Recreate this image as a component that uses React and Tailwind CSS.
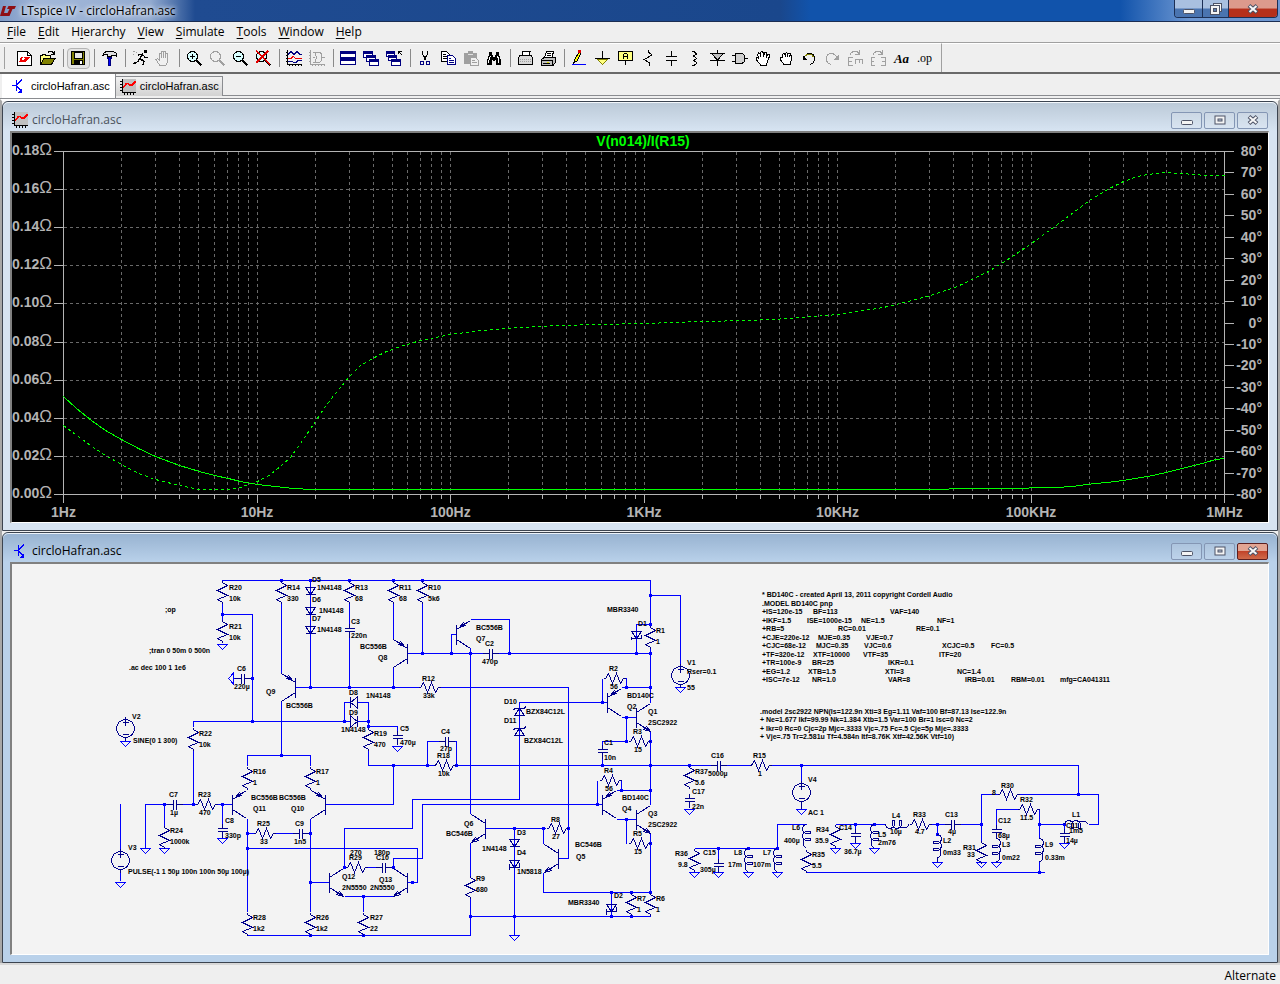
import React from 'react';
import clsx from 'clsx';

const menus = ['File', 'Edit', 'Hierarchy', 'View', 'Simulate', 'Tools', 'Window', 'Help'];
// index of the underlined accelerator letter
const accelerators = { Hierarchy: 1 };

/* ---------- toolbar icons ---------- */

const K = '#000000';
const G = '#a0a0a0';
const N = '#000080';

const Lens = ({ color = K, fill = '#d8ffff', children }) => (
  <>
    <path d="M10 10L15.500 15.500" stroke={color} strokeWidth="2" />
    <circle cx="6.500" cy="6.500" r="5" fill={fill} stroke={color} />
    {children}
  </>
);

const PlotAxes = ({ color }) => (
  <path d="M1.500 0V14.500H16M0 2.500H1M0 5.500H1M0 8.500H1M0 11.500H1M3.500 14V16M6.500 14V16M9.500 14V16M12.500 14V16M15.500 14V16" stroke={color} fill="none" />
);

const Rect = ({ x, y, w, h }) => (
  <>
    <rect x={x + 0.5} y={y + 0.5} width={w - 1} height={h - 1} fill="#fff" stroke={N} />
    <rect x={x} y={y} width={w} height="3" fill={N} />
  </>
);

const icons = {
  New: (
    <>
      <path d="M1.500 1.500H11.500L15.500 5.500V15.500H1.500Z" fill="#fff" stroke={K} />
      <path d="M11.500 1.500V5.500H15.500" fill="none" stroke={K} />
      <path d="M5 7H7L6 10H8L9 8H8V7H14L13 9H12L10 12H3Z" fill="#f00000" />
    </>
  ),
  Open: (
    <>
      <path d="M1.500 13.500V5.500H3L4 4.500H6L7 5.500H11.500V8.500" fill="#ffff80" stroke={K} />
      <path d="M1.500 14.500L5 8.500H16L12.500 14.500Z" fill="#808000" stroke={K} />
      <path d="M9 2.500C11 .5 13 1 15 3.500M15.500 1V4.500H12" fill="none" stroke={K} />
    </>
  ),
  Save: (
    <>
      <rect x="1.500" y="1.500" width="13" height="13" fill="#808000" stroke={K} />
      <rect x="4" y="2" width="8" height="6" fill="#e8e8e8" stroke={K} />
      <rect x="4" y="10" width="9" height="5" fill={K} />
      <rect x="10" y="11" width="2" height="3" fill="#fff" />
    </>
  ),
  'Control Panel': (
    <>
      <path d="M1.500 5.500L3.500 2.500L5.500 1.500H12.500L15.500 3.500V6.500L14 5.500H11L10.500 6.500H6.500L6 4.500H4Z" fill="#e0e0e0" stroke={K} />
      <path d="M6.500 7.500H10.500L9.500 9.500V15.500H7.500V9.500Z" fill="#0000ff" stroke={N} />
    </>
  ),
  Run: (
    <>
      <rect x="12" y="0" width="3" height="3" fill={K} />
      <path d="M11 3.500L8 8.500L12 11.500L11 15M7.500 9L5.500 12.500L1 13.500" fill="none" stroke={K} strokeWidth="1.500" />
      <path d="M10 4.500L7 4.500L5.500 6.500M11.500 5.500L13 7.500H15.500" fill="none" stroke={K} />
      <path d="M1 1.500H3M4 2.500H5M1 4.500H2" stroke={G} />
    </>
  ),
  Halt: <path d="M4.500 15L1 9.500L2.500 8.500L4.500 10.500V3.500H6.500V8V1.500H8.500V8V1.500H10.500V8V3.500H12.500V12L11 15ZM6.500 15.500H11" fill="#f0f0f0" stroke={G} />,
  'Zoom Area': <Lens><path d="M4 6.500H9M6.500 4V9" stroke={K} /></Lens>,
  Pan: <Lens color={G} fill="#f0f0f0" />,
  'Zoom Back': <Lens><path d="M4 6.500H9" stroke={K} /></Lens>,
  'Zoom Full': <Lens><path d="M1 1L15 14M13 1L1 13" stroke="#e00000" strokeWidth="1.500" /></Lens>,
  'Autorange Y': (
    <>
      <PlotAxes color={K} />
      <path d="M2 4.500L5 1.500L8 4.500L11 1.500L14 4.500H16" stroke={N} fill="none" />
      <path d="M2 8.500H5L7 6.500L10 8.500H16" stroke="#f00000" fill="none" />
      <path d="M2 11.500H6L8 12.500H10L12 10.500H16" stroke={N} fill="none" />
    </>
  ),
  'Plot Settings': (
    <>
      <PlotAxes color={G} />
      <path d="M4 7.500H6M6 2.500H10C14 3 14 11 10 12.500H6L7.500 7.500ZM4 2.500H6M4 12.500H6M13 7.500H16" stroke={G} fill="none" />
    </>
  ),
  'Tile Windows': <><Rect x={0} y={1} w={16} h={7} /><Rect x={0} y={8} w={16} h={7} /></>,
  'Cascade Windows': <><Rect x={0} y={1} w={10} h={7} /><Rect x={3} y={5} w={10} h={7} /><Rect x={6} y={9} w={10} h={7} /></>,
  'Close Windows': (
    <>
      <Rect x={0} y={1} w={9} h={6} /><Rect x={2} y={5} w={9} h={6} /><Rect x={5} y={9} w={10} h={7} />
      <path d="M12 1.500H16M12.500 1V4M12 1L16 5" stroke={K} fill="none" />
    </>
  ),
  Cut: (
    <>
      <path d="M5.500 1V4L9.500 10.500M10.500 1V4L6.500 10.500" stroke={K} fill="none" />
      <circle cx="5" cy="13" r="2" fill="none" stroke={N} />
      <circle cx="11" cy="13" r="2" fill="none" stroke={N} />
    </>
  ),
  Copy: (
    <>
      <path d="M1.500 1.500H6.500L9.500 4.500V11.500H1.500Z" fill="#fff" stroke={K} />
      <path d="M3 4.500H6M3 6.500H7M3 8.500H7" stroke={K} />
      <path d="M7.500 5.500H12.500L15.500 8.500V14.500H7.500Z" fill="#fff" stroke={N} />
      <path d="M9 8.500H11M9 10.500H14M9 12.500H14" stroke={N} />
    </>
  ),
  Paste: (
    <>
      <path d="M1 3H5V1H10V3H14V14H1Z" fill={G} />
      <path d="M5 4.500H10" stroke="#e0e0e0" />
      <path d="M7.500 7.500H12.500L15.500 10.500V15.500H7.500Z" fill="#f0f0f0" stroke={G} />
      <path d="M9 10.500H12M9 12.500H14" stroke={G} />
    </>
  ),
  Find: (
    <>
      <path d="M3 2H6V5H7V7H9V5H10V2H13V5L15 10V15H10V10H9V11H7V10H6V15H1V10L3 5Z" fill={K} />
      <path d="M4.500 6L2.500 11V13M11.500 6L12.500 9V13" stroke="#fff" fill="none" />
    </>
  ),
  'Print Setup': (
    <>
      <path d="M4.500 6.500L6 1.500H13L12 6.500" fill="#fff" stroke={K} />
      <path d="M1.500 7.500L3 5.500H14L15.500 7.500V14.500H1.500Z" fill="#d8d8d8" stroke={K} />
      <path d="M3 9.500H14M3 11.500H14" stroke={G} strokeDasharray="1 1" />
    </>
  ),
  Print: (
    <>
      <path d="M4.500 7.500L6.500 1.500H13.500L12 7.500" fill="#fff" stroke={K} />
      <path d="M7 3.500H11M6.500 5.500H11" stroke={K} />
      <path d="M1.500 9.500L4 7.500H15.500V12L13 15.500H1.500Z" fill="#c0c0c0" stroke={K} />
      <path d="M1.500 10.500H12.500V15M3 13.500H10" stroke={K} fill="none" />
      <path d="M7 12.500H9" stroke="#e0e000" />
    </>
  ),
  Wire: (
    <>
      <path d="M2.500 13L4 9L8 2L10 3L6 11Z" fill="#ffff00" stroke={K} />
      <rect x="7" y="0" width="3" height="3" fill="#e00000" />
      <path d="M1 14.500H15" stroke="#0000ff" />
    </>
  ),
  Ground: (
    <>
      <path d="M8.500 1V8.500" stroke={K} />
      <path d="M3 9L8.500 14.500L14 9Z" fill="#ffff80" stroke="#808000" />
      <path d="M1 8.500H16" stroke={K} />
    </>
  ),
  'Label Net': (
    <>
      <rect x="1.500" y="1.500" width="14" height="9" fill="#ffff80" stroke={K} />
      <path d="M6.500 9V4.500L7.500 3.500H9.500L10.500 4.500V9M6.500 6.500H10.500" stroke={K} fill="none" />
      <path d="M8.500 11V15" stroke={K} />
    </>
  ),
  Resistor: <path d="M8.500 0V2L12 5L4 9.500L9 12.500V16" stroke={K} fill="none" />,
  Capacitor: <><path d="M8.500 1V7M8.500 10V16" stroke={K} /><path d="M3 6.500H14M3 10.500H14" stroke={K} /></>,
  Inductor: <path d="M6 1.500H8L10 3.500V4.500L7 6H8L10 8V9L7 10.500H8L10 12V14L8 15.500H6" stroke={K} fill="none" />,
  Diode: <><path d="M8.500 0V16M1 10.500H16M1 3.500H16" stroke={K} /><path d="M2.500 3.500H14.500L8.500 10Z" fill="#c0c0c0" stroke={K} /></>,
  Component: <><path d="M0 5.500H4M0 11.500H4M13 8.500H16" stroke={K} /><path d="M3.500 3.500H9C14 4 14 13 9 13.500H3.500Z" fill="#d0d0d0" stroke={K} /></>,
  Move: <path d="M5.500 14.500L1 9.500V7.500H2.500L4 9L2.500 4.500L3.500 3L5 4L6 7L5.500 2.500L7 1L8.500 3V7L10 2L12 2.500L11 8L13 4.500L15 5L13 10L11 15.500H6Z" fill="#fff" stroke={K} />,
  Drag: (
    <>
      <path d="M6 14.500L2.500 10V8L4.500 7.500V4.500L6 3.500L7 4.500L8.500 2.500L10 4L12 3.500V5L13.500 5.500V9L12 14.500Z" fill="#fff" stroke={K} />
      <path d="M7.500 4V7M9.500 4V7M11.500 5V7" stroke={K} />
    </>
  ),
  Undo: <><path d="M3 8C5 2.500 12 2 13.500 7C14.500 11 12 14 9 14.500" stroke={K} fill="none" /><path d="M4 6C7 3 11 4 12.500 7" stroke="#808000" fill="none" /><path d="M1.500 5V10H6.500Z" fill={K} /></>,
  Redo: <><path d="M13 8C11 2.500 4 2 2.500 7C1.500 11 4 14 7 14.500" stroke={G} fill="none" /><path d="M14.500 5V10H9.500Z" fill={G} /></>,
  Rotate: <path d="M3 4.500C5 .5 10 .5 12 3.500M12.500 0V4.500H8M6 7.500H1.500V15.500H6M1.500 11.500H5M8 10V9.500H16M8.500 9V14M12.500 10V13M15.500 9V14" stroke={G} fill="none" />,
  Mirror: <path d="M3 4.500C5 .5 10 .5 12 3.500M12.500 0V4.500H8M5 7.500H1.500V15.500H5M1.500 11.500H4M11 7.500H15.500V15.500H11M15.500 11.500H12" stroke={G} fill="none" />,
};

const toolGroups = [
  ['New', 'Open'],
  ['Save'],
  ['Control Panel'],
  ['Run', 'Halt'],
  ['Zoom Area', 'Pan', 'Zoom Back', 'Zoom Full'],
  ['Autorange Y', 'Plot Settings'],
  ['Tile Windows', 'Cascade Windows', 'Close Windows'],
  ['Cut', 'Copy', 'Paste', 'Find'],
  ['Print Setup', 'Print'],
  ['Wire', 'Ground', 'Label Net', 'Resistor', 'Capacitor', 'Inductor', 'Diode', 'Component', 'Move', 'Drag', 'Undo', 'Redo', 'Rotate', 'Mirror', 'Text', 'SPICE Directive'],
];

const ToolButton = ({ name }) => (
  <button
    title={name}
    aria-label={name}
    className={clsx(
      'flex h-[21px] w-[23px] items-center justify-center',
      name === 'Save' && 'rounded-sm border border-[#b4b4b4] bg-[#e4e4e4]'
    )}
  >
    {name === 'Text' && <span className="font-['Liberation_Serif',serif] text-[13px] leading-none font-bold italic">Aa</span>}
    {name === 'SPICE Directive' && <span className="font-['Liberation_Serif',serif] text-[12px] leading-none">.op</span>}
    {icons[name] && (
      <svg viewBox="0 0 17 17" className="size-[17px] shrink-0" shapeRendering="crispEdges">{icons[name]}</svg>
    )}
  </button>
);

const PlotIcon = ({ className }) => (
  <svg viewBox="0 0 16 16" className={clsx('size-4 shrink-0', className)} shapeRendering="crispEdges">
    <rect x="2" width="14" height="14" fill="#c0c0c0" />
    <path d="M2.500 0V13.500H16M0 2.500H2M0 5.500H2M0 8.500H2M0 11.500H2M4.500 14V16M7.500 14V16M10.500 14V16M13.500 14V16" stroke="#000" fill="none" />
    <path d="M3 8.500L6 5L8 4.500L10 6L12 6L15.500 2.500" stroke="#f00" strokeWidth="1.500" fill="none" />
  </svg>
);

const SchematicIcon = ({ className }) => (
  <svg viewBox="0 0 16 16" className={clsx('size-4 shrink-0', className)} shapeRendering="crispEdges">
    <path d="M2 7.500H6M6.500 2V13M7 6.500L12 1.500M7 8.500L12 13.500" stroke="#0000ff" fill="none" />
    <path d="M12 14.500V10.500L8 14.500Z" fill="#0000ff" />
  </svg>
);

/* ---------- window chrome ---------- */

const MinGlyph = () => (
  <svg viewBox="0 0 12 12" className="h-3 w-3"><rect x="0.500" y="6.500" width="11" height="4" rx="1" fill="#f4f4f4" stroke="#4d5366" /></svg>
);
const MaxGlyph = () => (
  <svg viewBox="0 0 12 12" className="h-3 w-3">
    <rect x="1" y="2" width="10" height="8" fill="#f4f4f4" stroke="#4d5366" />
    <rect x="4" y="5" width="4" height="2" fill="#b9c6da" stroke="#4d5366" />
  </svg>
);
const RestoreGlyph = () => (
  <svg viewBox="0 0 12 12" className="h-3 w-3">
    <rect x="3.500" y="0.500" width="8" height="8" fill="#f4f4f4" stroke="#4d5366" />
    <rect x="0.500" y="2.500" width="9" height="9" fill="#f4f4f4" stroke="#4d5366" />
    <rect x="3.500" y="5.500" width="3" height="3" fill="#5b7db0" stroke="#4d5366" />
  </svg>
);
const CloseGlyph = () => (
  <svg viewBox="0 0 12 12" className="h-3 w-3">
    <path d="M2 2.500L10 9.500M10 2.500L2 9.500" stroke="#4d5366" strokeWidth="4" />
    <path d="M2.500 3L9.500 9M9.500 3L2.500 9" stroke="#f8f8f8" strokeWidth="2" />
  </svg>
);

const ChildButton = ({ label, danger, children }) => (
  <button
    aria-label={label}
    className={clsx(
      'flex h-[17px] w-[31px] items-center justify-center rounded-xs border',
      danger ? 'border-[#5c1f1f] bg-linear-to-b from-[#e2a593] from-45% via-[#c2442a] via-50% to-[#cf6a4a]' : 'border-[#8496b4] bg-white/10'
    )}
  >
    {children}
  </button>
);

const ChildWindow = ({ active, icon, title, children }) => (
  <section
    className={clsx(
      'rounded-t-md border border-[#3c4450]',
      active ? 'bg-[#b9d1ea]' : 'bg-[#d7e4f2]'
    )}
  >
    <header
      className={clsx(
        'flex h-[29px] items-center rounded-t-md border-t border-white/70 bg-linear-to-b pt-1.5 pr-[9px] pl-2',
        active ? 'from-[#98b3d1] to-[#b9d1ea]' : 'from-[#bccad8] to-[#d7e4f2]'
      )}
    >
      {icon}
      <h2 className={clsx("ml-1 grow font-['Open_Sans',sans-serif] text-[12px] leading-4", active ? 'text-black' : 'text-[#4a525c]')}>{title}</h2>
      <div className="flex gap-0.5">
        <ChildButton label="Minimize"><MinGlyph /></ChildButton>
        <ChildButton label="Maximize"><MaxGlyph /></ChildButton>
        <ChildButton label="Close" danger={active}><CloseGlyph /></ChildButton>
      </div>
    </header>
    <div className="mr-2 mb-[7px] ml-[7px] border-t-2 border-r border-b border-l-2 border-t-[#808080] border-r-white border-b-white border-l-[#808080]">
      {children}
    </div>
  </section>
);

/* ---------- waveform plot ---------- */

const LEFT = 63.5;
const RIGHT = 1224.5;
const TOP = 151.5;
const BOTTOM = 494.5;
const DECADE = (RIGHT - LEFT) / 6;

const freqLabels = ['1Hz', '10Hz', '100Hz', '1KHz', '10KHz', '100KHz', '1MHz'];
const ohmLabels = ['0.18', '0.16', '0.14', '0.12', '0.10', '0.08', '0.06', '0.04', '0.02', '0.00'];
const phaseLabels = Array.from({ length: 17 }, (_, i) => 80 - i * 10);

const gridX = [];
for (let d = 0; d < 6; d++) {
  for (let m = 1; m <= 9; m++) {
    gridX.push({ x: Math.floor(LEFT + DECADE * (d + Math.log10(m))) + 0.5, major: m === 1 });
  }
}
gridX.push({ x: RIGHT, major: true });

const magnitude =
  '63,396 76,408 91,420 105,430 121,439 138,448 155,456 179,465 199,471 214,475 228,478 240,481 257,484 275,486 293,488 312,489 948,489 949,488 1028,488 1029,487 1055,487 1072,486 1086,484 1106,482 1123,480 1147,476 1166,472 1181,468 1194,465 1205,462 1215,459 1224,458';
const phase =
  '63,425 75,434 90,445 105,455 121,464 138,473 155,479 179,485 199,489 213,489 228,489 240,487 248,484 257,481 270,474 281,465 290,457 300,443 315,421 324,407 335,393 349,376 360,365 372,358 386,351 400,346 420,340 450,334 480,330 520,327 560,325 600,324 645,323 700,321 750,320 790,318 838,314 883,307 895,304 908,301 930,295 957,286 988,271 1012,256 1031,243 1053,227 1077,209 1089,200 1107,189 1123,181 1137,176 1147,174 1166,172 1181,173 1194,174 1205,175 1224,175';

const Plot = () => (
  <svg viewBox="12 133 1256 389" className="block w-full bg-black" role="img" aria-label="Output impedance plot">
    <g shapeRendering="crispEdges" fill="none">
      <g stroke="#696969" strokeDasharray="3 3">
        {gridX.slice(1, -1).map(({ x }) => <path key={x} d={`M${x} ${TOP}V${BOTTOM}`} />)}
        {ohmLabels.slice(1, -1).map((label, i) => {
          const y = Math.floor(TOP + (i + 1) * 38.1) + 0.5;
          return <path key={label} d={`M${LEFT} ${y}H${RIGHT}`} />;
        })}
      </g>
      <g stroke="#b4b4b4">
        <path d={`M54 ${TOP}H1234M54 ${BOTTOM}H1234M${LEFT} ${TOP}V503M${RIGHT} ${TOP}V503`} />
        {gridX.map(({ x, major }) => <path key={x} d={`M${x} ${BOTTOM}V${major ? 503 : 499}`} />)}
        {ohmLabels.map((label, i) => {
          const y = Math.floor(TOP + i * 38.1) + 0.5;
          return <path key={label} d={`M54 ${y}H${LEFT}`} />;
        })}
        {phaseLabels.map((deg, i) => {
          const y = Math.floor(TOP + i * 21.44) + 0.5;
          return <path key={deg} d={`M${RIGHT} ${y}H1234`} />;
        })}
      </g>
      <g stroke="#00ff00" transform="translate(0.5 0.5)">
        <polyline points={magnitude} />
        <polyline points={phase} strokeDasharray="3 3" />
      </g>
    </g>
    <g className="font-['Liberation_Sans',sans-serif] text-[14px]" fill="#b4b4b4">
      {ohmLabels.map((label, i) => (
        <text key={label} x="12" y={Math.floor(TOP + i * 38.1) + 4}>
          <tspan className="font-bold">{label}</tspan>
          <tspan className="text-[17px]">Ω</tspan>
        </text>
      ))}
      {phaseLabels.map((deg, i) => (
        <text key={deg} x="1262" y={Math.floor(TOP + i * 21.44) + 5} textAnchor="end" className="font-bold">{deg}°</text>
      ))}
      {freqLabels.map((label, i) => (
        <text key={label} x={LEFT + i * DECADE} y="517" textAnchor="middle" className="font-bold">{label}</text>
      ))}
      <text x="643" y="146" textAnchor="middle" fill="#00ff00" className="font-bold">V(n014)/I(R15)</text>
    </g>
  </svg>
);

/* ---------- schematic ---------- */

const wires = [
  'M222 580.500H650.500V626M650.500 647V703M650.500 732V805M650.500 834V893',
  'M650.500 595.500H680.500V665M222.500 603V620M222.500 614.500H252.500V721.500M193.500 727V721.500H344.500V702.500H350M358 702.500H368.500V727',
  'M344.500 721.500H350M358 721.500H368.500M281.500 603V673M281.500 702V755.500M247.500 766V755.500H310.500V766',
  'M310.500 580V687.500M295.500 687.500H419M440 687.500H568.500V858.500H558.500M349.500 603V627M349.500 632V687.500',
  'M393.500 603V639M393.500 668V687.500M422.500 603V653.500M407.500 653.500H488M493 653.500H650.500',
  'M451.500 653.500V634.500H456M470.500 619.500H509.500V653.500M470.500 648V814M470.500 843V876M470.500 898V935.500H247.500',
  'M470.500 916.500H650.500M514.500 828V935M485.500 828.500H546M543.500 828.500V844M543.500 873V892.500H650.500',
  'M368.500 726.500H397.500V734M368.500 749V765.500H434M454 765.500H716M721 765.500H750M771 765.500H1078.500V794.500',
  'M393.500 765.500V804.500H325.500M427.500 765.500V741.500H444M449 741.500H456.500V765.500',
  'M607.500 702.500H519.500V799.500H412.500V828.500H344.500V867.500M602.500 804.500H422.500V858.500H393.500V867.500',
  'M407.500 882.500H417.500V848.500H247.500M329.500 882.500H310.500M310.500 819V912M247.500 819V912',
  'M247.500 833.500H254M274 833.500H298M303 833.500H310.500M344.500 896.500H393.500M363.500 896.500V912M367 867.500H381M386 867.500H393.500',
  'M145.500 848V804.500H172M177 804.500H196M217 804.500H232.500M164.500 804.500V826M193.500 749V804.500M222.500 804.500V827M120.500 804V850M120.500 869V881',
  'M602.500 702.500V678.500M626.500 678V687.500M621.500 687.500H650.500M621.500 717.500H636.500M626.500 717.500V741.500H602.500V748M602.500 753V765.500',
  'M597.500 804.500V780.500M621.500 780V790.500M616.500 790.500H650.500M616.500 819.500H636.500M626.500 819.500V843.500',
  'M650.500 624.500H636.500V653.500M611.500 892.500V916.500M631.500 914V916M650.500 914V916M801.500 765.500V783',
  'M694.500 848.500H777.500V824.500H806.500M806.500 872.500H1045M835.500 824.500H885M931 824.500H950M955 824.500H981.500V842M981.500 824.500V794.500H998',
  'M1018 794.500H1098.500V824.500H1089M996.500 828V809.500H1018M1037 809.500H1039.500V838M1039.500 824.500H1064.500V832M1039.500 861V872.500M937.500 824.500V834',
  'M718.500 848.500V862M855.500 824.500V832M233 678.500H240M245 678.500H252.500',
];

const junctions = [
  [281, 580], [310, 580], [349, 580], [393, 580], [422, 580], [650, 595], [222, 614], [252, 678], [252, 721],
  [310, 687], [349, 687], [393, 687], [344, 721], [368, 721], [368, 726], [281, 755], [422, 653], [451, 653],
  [470, 653], [509, 653], [636, 653], [650, 653], [650, 624], [650, 687], [626, 687], [602, 702], [626, 717],
  [626, 741], [650, 741], [602, 765], [650, 765], [689, 765], [801, 765], [393, 765], [427, 765], [456, 765],
  [164, 804], [193, 804], [222, 804], [247, 833], [310, 833], [247, 848], [310, 882], [344, 867], [393, 867],
  [412, 882], [363, 896], [310, 935], [363, 935], [470, 916], [514, 916], [514, 828], [543, 828], [568, 828],
  [597, 804], [621, 790], [650, 790], [626, 819], [650, 843], [611, 892], [631, 892], [650, 892], [611, 916],
  [631, 916], [718, 848], [748, 848], [777, 848], [855, 824], [874, 824], [937, 824], [937, 834], [981, 824],
  [1039, 824], [1064, 824], [1078, 794], [1039, 872],
];

const vResistors = [
  [222, 580], [222, 619], [281, 580], [349, 580], [393, 580], [422, 580], [368, 727], [247, 766], [310, 766],
  [164, 825], [247, 912], [310, 912], [363, 912], [470, 875], [650, 625], [631, 892], [650, 892], [689, 765],
  [835, 824], [806, 849], [694, 848], [981, 840], [193, 727],
];
const hResistors = [
  [419, 687], [196, 804], [254, 833], [346, 867], [434, 765], [604, 678], [629, 741], [547, 828], [600, 780],
  [629, 843], [750, 765], [910, 824], [998, 794], [1018, 809],
];
const vCaps = [[349, 629], [397, 736], [222, 829], [689, 799], [602, 750], [855, 834], [718, 864], [996, 830], [1064, 834]];
const hCaps = [[242, 678], [490, 653], [446, 741], [174, 804], [300, 833], [383, 867], [718, 765], [952, 824]];
const grounds = [
  [222, 644], [397, 746], [145, 848], [164, 848], [222, 838], [120, 882], [125, 741], [514, 935], [680, 687],
  [689, 809], [801, 809], [694, 872], [718, 872], [748, 872], [777, 872], [835, 848], [855, 843], [874, 848],
  [937, 862], [981, 862], [996, 862], [1064, 843],
];
const sources = [[125, 728], [120, 860], [680, 675], [801, 792]];
const coils = [[748, 848], [777, 848], [806, 824], [874, 824]];
const mirroredCoils = [[937, 834], [996, 838], [1039, 838]];

// bar x, base y, side of collector/emitter, pnp has its arrow on top
const transistors = [
  [295, 687, -1, true], [407, 653, -1, true], [456, 634, 1, true], [232, 804, 1, true], [325, 804, -1, true],
  [607, 702, 1, true], [602, 804, 1, true], [329, 882, 1, false], [407, 882, -1, false], [485, 828, -1, false],
  [558, 858, -1, false], [636, 717, 1, false], [636, 819, 1, false],
];

const labels = [
  ['R20', 229, 590], ['10k', 229, 601], ['R21', 229, 629], ['10k', 229, 640], [';op', 165, 612],
  [';tran 0 50m 0 500n', 149, 653], ['.ac dec 100 1 1e6', 129, 670], ['C6', 237, 671], ['220µ', 234, 689],
  ['V2', 132, 719], ['SINE(0 1 300)', 133, 743], ['R22', 199, 736], ['10k', 199, 747],
  ['R14', 287, 590], ['330', 287, 601], ['D5', 312, 582], ['1N4148', 317, 590], ['D6', 312, 602],
  ['1N4148', 319, 613], ['D7', 312, 621], ['1N4148', 317, 632], ['R13', 355, 590], ['68', 355, 601],
  ['C3', 351, 624], ['220n', 351, 638], ['R11', 399, 590], ['68', 399, 601], ['R10', 428, 590], ['5k6', 428, 601],
  ['BC556B', 360, 649], ['Q8', 378, 660], ['Q9', 266, 694], ['BC556B', 286, 708], ['D8', 349, 695],
  ['1N4148', 366, 698], ['D9', 349, 715], ['1N4148', 341, 732], ['R19', 374, 736], ['470', 374, 747],
  ['C5', 400, 731], ['470µ', 400, 745], ['BC556B', 476, 630], ['Q7', 476, 641], ['C2', 485, 646],
  ['470p', 482, 664], ['R12', 422, 681], ['33k', 423, 698], ['MBR3340', 607, 612], ['D1', 638, 626],
  ['R1', 656, 633], ['1', 656, 644], ['V1', 687, 665], ['Rser=0.1', 687, 674], ['55', 687, 690],
  ['R2', 609, 671], ['56', 610, 689], ['BD140C', 627, 698], ['Q2', 627, 709], ['Q1', 648, 714],
  ['2SC2922', 648, 725], ['D10', 504, 704], ['BZX84C12L', 526, 714], ['D11', 504, 723], ['BZX84C12L', 524, 743],
  ['C4', 441, 734], ['27p', 440, 751], ['R18', 437, 758], ['10k', 438, 776], ['C1', 604, 745], ['10n', 604, 760],
  ['R3', 633, 734], ['15', 634, 752], ['R4', 604, 773], ['56', 605, 791], ['BD140C', 622, 800], ['Q4', 622, 811],
  ['Q3', 648, 816], ['2SC2922', 648, 827], ['R5', 633, 836], ['15', 634, 854], ['R37', 695, 774], ['5.6', 695, 785],
  ['5000µ', 708, 776], ['C16', 711, 758], ['C17', 692, 794], ['22n', 692, 809], ['R15', 753, 758], ['1', 758, 776],
  ['V4', 808, 782], ['AC 1', 808, 815], ['R16', 253, 774], ['1', 253, 785], ['R17', 316, 774], ['1', 316, 785],
  ['BC556B', 251, 800], ['Q11', 253, 811], ['BC556B', 279, 800], ['Q10', 291, 811], ['C7', 169, 797],
  ['1µ', 170, 815], ['R23', 198, 797], ['470', 199, 815], ['C8', 225, 823], ['330p', 225, 838], ['R24', 170, 833],
  ['1000k', 170, 844], ['V3', 128, 850], ['PULSE(-1 1 50µ 100n 100n 50µ 100µ)', 128, 874], ['R25', 257, 826],
  ['33', 260, 844], ['C9', 295, 826], ['1n5', 294, 844], ['270', 350, 855], ['180p', 374, 855], ['R29', 349, 860],
  ['C10', 376, 860], ['Q12', 342, 879], ['Q13', 379, 882], ['2N5550', 342, 890], ['2N5550', 370, 890],
  ['R28', 253, 920], ['1k2', 253, 931], ['R26', 316, 920], ['1k2', 316, 931], ['R27', 370, 920], ['22', 370, 931],
  ['Q6', 464, 826], ['BC546B', 446, 836], ['D3', 517, 835], ['1N4148', 482, 851], ['D4', 517, 855],
  ['1N5818', 517, 874], ['R8', 551, 822], ['27', 552, 839], ['BC546B', 575, 847], ['Q5', 576, 859],
  ['R9', 476, 881], ['680', 476, 892], ['MBR3340', 568, 905], ['D2', 614, 898], ['R7', 637, 901], ['1', 637, 912],
  ['R6', 656, 901], ['1', 656, 912], ['R36', 675, 856], ['9.8', 678, 867], ['C15', 703, 855], ['305µ', 700, 872],
  ['L8', 734, 855], ['17m', 728, 867], ['L7', 763, 855], ['107m', 753, 867], ['L6', 792, 830], ['400µ', 784, 843],
  ['R34', 816, 832], ['35.9', 815, 843], ['C14', 839, 830], ['36.7µ', 844, 854], ['R35', 812, 857],
  ['5.5', 812, 868], ['L5', 878, 837], ['2m76', 878, 845], ['L4', 892, 818], ['10µ', 890, 834], ['R33', 913, 817],
  ['4.7', 915, 834], ['C13', 945, 817], ['4µ', 948, 834], ['L2', 943, 843], ['0m33', 943, 855], ['R31', 963, 850],
  ['33', 967, 857], ['C12', 998, 823], ['68µ', 998, 838], ['L3', 1002, 847], ['0m22', 1002, 860], ['R30', 1001, 788],
  ['8', 992, 795], ['R32', 1020, 802], ['11.5', 1020, 820], ['L1', 1072, 817], ['C11', 1066, 828], ['1m5', 1069, 833],
  ['14µ', 1066, 843], ['L9', 1045, 847], ['0.33m', 1045, 860],
];

// each row lists [text, x] pairs, since the source is tab separated
const pnpModel = [
  [['* BD140C - created April 13, 2011 copyright Cordell Audio', 762]],
  [['.MODEL BD140C pnp', 762]],
  [['+IS=120e-15', 762], ['BF=113', 813], ['VAF=140', 890]],
  [['+IKF=1.5', 762], ['ISE=1000e-15', 807], ['NE=1.5', 861], ['NF=1', 937]],
  [['+RB=5', 762], ['RC=0.01', 838], ['RE=0.1', 916]],
  [['+CJE=220e-12', 762], ['MJE=0.35', 818], ['VJE=0.7', 866]],
  [['+CJC=68e-12', 762], ['MJC=0.35', 816], ['VJC=0.6', 864], ['XCJC=0.5', 942], ['FC=0.5', 991]],
  [['+TF=320e-12', 762], ['XTF=10000', 813], ['VTF=35', 863], ['ITF=20', 939]],
  [['+TR=100e-9', 762], ['BR=25', 812], ['IKR=0.1', 888]],
  [['+EG=1.2', 762], ['XTB=1.5', 808], ['XTI=3', 885], ['NC=1.4', 957]],
  [['+ISC=7e-12', 762], ['NR=1.0', 812], ['VAR=8', 888], ['IRB=0.01', 965], ['RBM=0.01', 1011], ['mfg=CA041311', 1060]],
];

const npnModel = [
  '.model 2sc2922 NPN(Is=122.9n Xti=3 Eg=1.11 Vaf=100 Bf=87.13 Ise=122.9n',
  '+ Ne=1.677 Ikf=99.99 Nk=1.384 Xtb=1.5 Var=100 Br=1 Isc=0 Nc=2',
  '+ Ikr=0 Rc=0 Cjc=2p Mjc=.3333 Vjc=.75 Fc=.5 Cje=5p Mje=.3333',
  '+ Vje=.75 Tr=2.581u Tf=4.584n Itf=8.76K Xtf=42.56K Vtf=10)',
];

const Transistor = ({ x, y, side, pnp }) => (
  <g transform={`translate(${x + 0.5} ${y + 0.5})`}>
    <path d="M0 -10V10" />
    <g transform={`scale(${side} 1)`}>
      <path d="M0 -5L14 -14M0 5L14 14" />
      {pnp ? <path d="M3 -7L7 -12L9 -9Z" /> : <path d="M14 14L10 9L7 12Z" />}
    </g>
  </g>
);

// every symbol is placed by its top or left pin
const Symbols = ({ at, d }) =>
  at.map(([x, y]) => <path key={`${x}-${y}`} d={d} transform={`translate(${x + 0.5} ${y + 0.5})`} />);

const coilPath = 'M0 0C-5 1 -5 7 -1 9C6 11 6 5 0 7C-5 8 -5 14 -1 16C6 18 6 12 0 14C-5 15 -4 22 0 23';

const Schematic = () => (
  <svg viewBox="12 564 1256 390" className="block w-full bg-[#f3f3f3]" role="img" aria-label="Amplifier schematic">
    <g fill="none" stroke="#0000ff" shapeRendering="crispEdges">
      {wires.map((d) => <path key={d} d={d} />)}
      <Symbols at={grounds} d="M-5 0H5L0 5Z" />
      <path d="M233.500 673V684L228.500 678.500Z" />
    </g>
    <g fill="#0000ff">
      {junctions.map(([x, y]) => <rect key={`${x}-${y}`} x={x - 1} y={y - 1} width="3" height="3" />)}
    </g>
    <g fill="none" stroke="#00008c" shapeRendering="crispEdges">
      <Symbols at={vResistors} d="M0 0V2L5 5L-5 10L5 15L-5 19L0 22V23" />
      <Symbols at={hResistors} d="M-1 0H1L4 -5L8 5L12 -5L16 5L19 0H21" />
      <Symbols at={vCaps} d="M-5 -1H5M-5 2H5M0 -6V-1M0 2V8" />
      <Symbols at={hCaps} d="M-1 -5V5M2 -5V5M-8 0H-1M2 0H8" />
      <Symbols at={sources} d="M0 -12V-9M0 9V12M-3 -6H3M0 -9V-3M-3 6H3" />
      {/* voltage source leads down to ground */}
      <path d="M801.500 801V809M680.500 684V687" />
      {/* diodes pointing down */}
      <Symbols at={[[310, 587], [310, 607], [310, 626], [636, 631], [514, 839], [514, 860], [611, 904]]} d="M-5 0H5L0 7ZM-5 7H5" />
      <path d="M631.500 637V640M641.500 638.500V635M509.500 864V870M519.500 867V863M606.500 909V915M616.500 911V907" />
      {/* clamp pair and zeners */}
      <path d="M357.500 697V708L350.500 702.500ZM350.500 697V708M350.500 716V727L357.500 721.500ZM357.500 716V727" />
      <Symbols at={[[519, 708], [519, 728]]} d="M-6 2L-5 0H5L6 -2M-5 7H5L0 0Z" />
      {/* choke leads */}
      <path d="M937.500 857V862M996.500 861V862" />
      <Symbols at={coils} d={coilPath} />
      {mirroredCoils.map(([x, y]) => <path key={x} d={coilPath} transform={`translate(${x + 0.5} ${y + 0.5}) scale(-1 1)`} />)}
      <path d={coilPath} transform="translate(885.500 824.500) rotate(-90)" />
      <path d={coilPath} transform="translate(1064.500 824.500) rotate(-90) scale(-1 1)" />
      {transistors.map(([x, y, side, pnp]) => <Transistor key={`${x}-${y}`} x={x} y={y} side={side} pnp={pnp} />)}
      {sources.map(([x, y]) => <circle key={`${x}-${y}`} cx={x + 0.5} cy={y + 0.5} r="9" />)}
    </g>
    <g className="font-['Liberation_Sans',sans-serif] text-[7px] font-bold" fill="#000" stroke="none">
      {labels.map(([text, x, y]) => <text key={`${x}-${y}`} x={x} y={y}>{text}</text>)}
      {pnpModel.map((row, i) => (
        <text key={i} y={597 + Math.round(i * 8.5)}>
          {row.map(([text, x]) => <tspan key={x} x={x}>{text}</tspan>)}
        </text>
      ))}
      {npnModel.map((line, i) => <text key={i} x="760" y={714 + Math.round(i * 8.4)}>{line}</text>)}
    </g>
  </svg>
);

/* ---------- application ---------- */

const MenuLabel = ({ text }) => {
  const i = accelerators[text] || 0;
  return <>{text.slice(0, i)}<span className="underline underline-offset-2">{text[i]}</span>{text.slice(i + 1)}</>;
};

const App = () => (
  <div className="min-h-screen bg-[#efefef] font-['Open_Sans',sans-serif] text-[12px] text-black">
    <header className="relative flex h-[22px] items-center overflow-hidden border-b border-[#1b2d52] bg-[linear-gradient(90deg,#7e9ac6_0,#a3b8d9_40px,#93abd0_150px,#1f4b91_195px,#1a478c_780px,#1153ab_810px,#1153ab_1120px,#6d97d2_1190px)]">
      <svg viewBox="0 0 16 12" className="h-3 w-4 shrink-0">
        <path d="M3 1H6L4 8H7.500L9.500 4H7L8.500 1H16L14.500 4H12.500L9.500 11H0Z" fill="#8f0f14" />
      </svg>
      <h1 className="ml-[5px] grow leading-5 [text-shadow:0_0_6px_#fff,0_0_4px_#fff]">LTspice IV - circloHafran.asc</h1>
      <div className="mr-0.5 flex h-[18px] self-start overflow-hidden rounded-b-sm border border-t-0 border-[#1c2f55]">
        <button aria-label="Minimize" className="flex w-[28px] items-center justify-center border-r border-[#1c2f55] bg-linear-to-b from-[#a9c0e0] from-45% to-[#4a74b0] to-55%"><MinGlyph /></button>
        <button aria-label="Restore" className="flex w-[26px] items-center justify-center border-r border-[#1c2f55] bg-linear-to-b from-[#a9c0e0] from-45% to-[#4a74b0] to-55%"><RestoreGlyph /></button>
        <button aria-label="Close" className="flex w-[48px] items-center justify-center bg-linear-to-b from-[#dc9a8c] from-45% to-[#b5301c] to-55%"><CloseGlyph /></button>
      </div>
    </header>

    <nav className="flex h-5 items-center pl-px">
      {menus.map((menu) => (
        <button key={menu} className="px-1.5 leading-5"><MenuLabel text={menu} /></button>
      ))}
    </nav>

    <div className="flex h-8 items-stretch border-t border-b-2 border-t-[#a0a0a0] border-b-[#696969]">
      <div className="flex items-center border-t border-r border-t-white border-r-[#a0a0a0] pr-[5px] pl-1">
        <div className="mr-2 h-[22px] w-px bg-[#a0a0a0]" />
        {toolGroups.map((group, i) => (
          <React.Fragment key={group[0]}>
            {i > 0 && <div className="flex w-2 justify-center"><div className="h-[18px] w-px bg-[#8a8a8a]" /></div>}
            {group.map((name) => <ToolButton key={name} name={name} />)}
          </React.Fragment>
        ))}
      </div>
      <div className="grow border-t border-t-white" />
    </div>

    <div className="flex h-[25px] items-start border-b border-[#8a8c90] pl-0.5 font-['Liberation_Sans',sans-serif] text-[11px]">
      <button className="flex h-6 items-center border-r border-[#8a8c90] bg-white pr-[5px] pl-2">
        <SchematicIcon className="mr-[5px]" />circloHafran.asc
      </button>
      <button className="mt-0.5 flex h-5 items-center border-t border-r border-[#8a8c90] bg-linear-to-b from-[#f2f2f2] to-[#d2d2d2] pr-[3px] pl-1">
        <PlotIcon className="mr-1" />circloHafran.asc
      </button>
      <div className="h-[22px] grow border-b border-[#8a8c90]" />
    </div>

    <main className="flex flex-col gap-px border-x-2 border-t-2 border-x-[#a8a8a8] border-t-white">
      <ChildWindow title="circloHafran.asc" icon={<PlotIcon className="ml-px" />}>
        <Plot />
      </ChildWindow>
      <ChildWindow active title="circloHafran.asc" icon={<SchematicIcon className="ml-px" />}>
        <Schematic />
      </ChildWindow>
    </main>

    <footer className="flex h-[21px] items-end justify-end border-t-2 border-[#d8d8d8] pr-1 leading-4">Alternate</footer>
  </div>
);

export default App;
